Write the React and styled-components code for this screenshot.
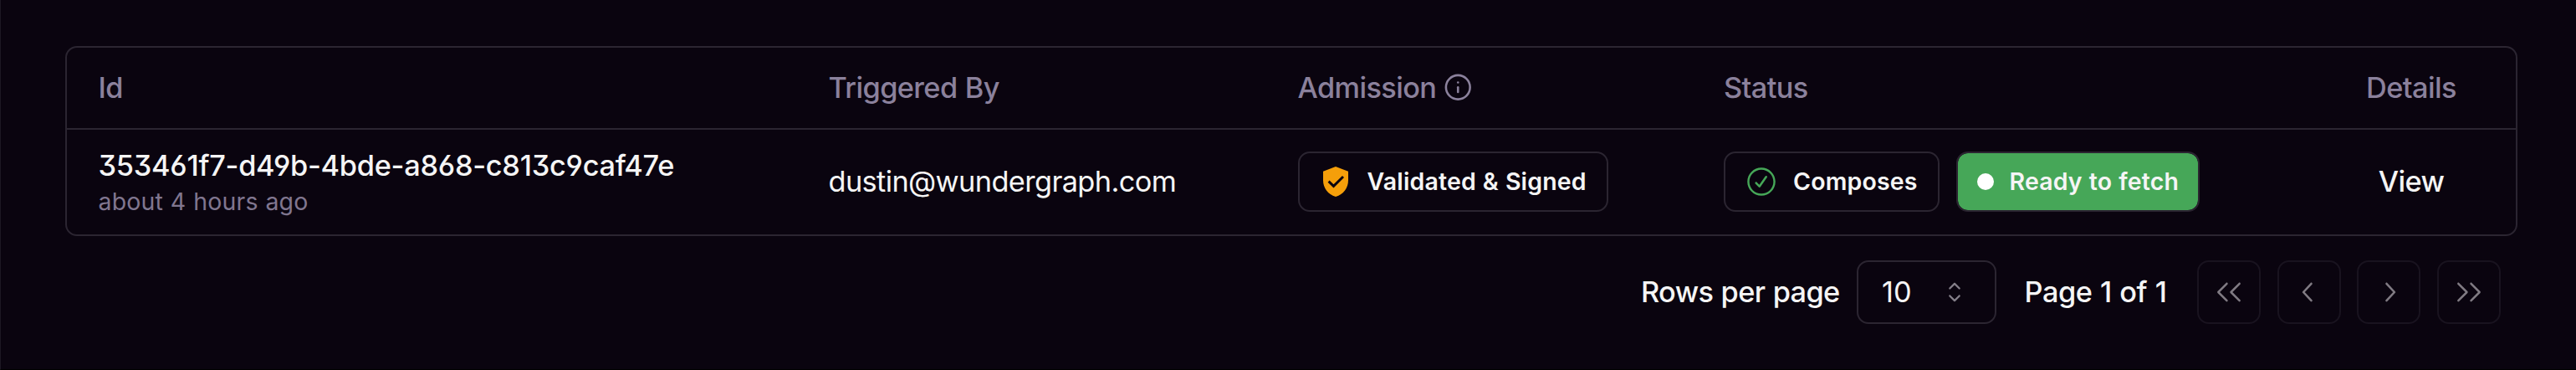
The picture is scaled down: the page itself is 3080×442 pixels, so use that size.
import React from "react";
import styled, { createGlobalStyle, css } from "styled-components";
import {
  RxCheckCircled,
  RxCaretSort,
  RxDoubleArrowLeft,
  RxDoubleArrowRight,
  RxChevronLeft,
  RxChevronRight,
} from "react-icons/rx";
import { Info } from "lucide-react";

const GlobalStyle = createGlobalStyle`
  *, *::before, *::after { box-sizing: border-box; }
  body {
    margin: 0;
    background: #0a040f;
    color: #f5f5f5;
    font-family: Inter, "Liberation Sans", sans-serif;
    font-size: 34.3px;
    letter-spacing: -0.6px;
    word-spacing: 0.7px;
    line-height: 47.5px;
    font-feature-settings: "cv03", "cv04", "cv09";
  }
  svg { display: block; flex: none; }
`;

const Page = styled.main`
  height: 442px;
  padding: 54.5px 70.5px 0 76.5px;
  border-left: 1px solid #1d1823;
  border-bottom: 1px solid #000;
  overflow: hidden;
`;

const Table = styled.section`
  border: 2px solid #2b2531;
  border-radius: 14px;
`;

const Row = styled.div`
  display: grid;
  grid-template-columns: 873px 561px 509.5px 735.5px 1fr;
  align-items: center;
  height: ${(p) => p.$height}px;
  color: ${(p) => (p.$header ? "#8b819c" : "inherit")};
  font-weight: ${(p) => (p.$header ? 500 : 400)};
  ${(p) =>
    p.$header &&
    css`
      border-bottom: 2px solid #2b2531;
    `}
`;

const Cell = styled.div`
  display: flex;
  align-items: center;
  gap: ${(p) => p.$gap || 0}px;
  padding-left: ${(p) => (p.$center ? 0 : 38)}px;
  justify-content: ${(p) => (p.$center ? "center" : "flex-start")};
  font-weight: ${(p) => (p.$strong ? 500 : "inherit")};
  white-space: nowrap;
`;

const Identity = styled.div`
  display: flex;
  flex-direction: column;
`;

const RunId = styled.span`
  font-weight: 500;
  letter-spacing: -0.25px;
  line-height: 47.4px;
`;

const Age = styled.span`
  color: #80768f;
  font-size: 28.5px;
  letter-spacing: 0.15px;
  line-height: 39.2px;
`;

const Badge = styled.span`
  display: flex;
  align-items: center;
  height: 72px;
  width: ${(p) => p.$width}px;
  padding-left: ${(p) => p.$pad}px;
  gap: ${(p) => p.$gap}px;
  border: 2px solid #2b2531;
  border-radius: 14px;
  background: ${(p) => (p.$filled ? "#46a758" : "transparent")};
  background-clip: padding-box;
  font-size: 28.5px;
  font-weight: 600;
  letter-spacing: 0.15px;
`;

const Dot = styled.i`
  width: 20px;
  height: 20px;
  border-radius: 50%;
  background: #fff;
`;

const Pagination = styled.footer`
  display: flex;
  align-items: center;
  justify-content: flex-end;
  margin-top: 29px;
  padding-right: 19.5px;
  font-weight: 500;
  white-space: nowrap;
`;

const PageSizeLabel = styled.span`
  width: 258px;
`;

const PageSize = styled.button`
  display: flex;
  align-items: center;
  justify-content: space-between;
  width: 167.5px;
  height: 76px;
  margin-right: 33px;
  padding: 0 29px 0 28px;
  border: 2px solid #2b2531;
  border-radius: 14px;
  background: transparent;
  color: inherit;
  font: inherit;
  font-weight: 400;
  letter-spacing: 0;

  svg { color: #847f89; }
`;

const PageCount = styled.span`
  width: 206.5px;
  letter-spacing: -0.4px;
`;

const Buttons = styled.div`
  display: flex;
  gap: 19.7px;
`;

const NavButton = styled.button`
  display: grid;
  place-items: center;
  width: 76px;
  height: 76px;
  padding: 0;
  border: 2px solid #19131f;
  border-radius: 14px;
  background: transparent;
  color: #807b83;
`;

function ShieldCheck() {
  return (
    <svg width="30" height="36" viewBox="0 0 30 36" fill="none">
      <path
        d="M15 0 30 5.7V16.5C30 25 24.5 33.5 15 36 5.5 33.5 0 25 0 16.5V5.7Z"
        fill="#f59f0a"
      />
      <path d="M6.6 17.6 12.5 23.4 24 12" stroke="#0a040f" strokeWidth="2.9" />
    </svg>
  );
}

export default function App() {
  return (
    <>
      <GlobalStyle />
      <Page>
        <Table>
          <Row $header $height={98}>
            <Cell>Id</Cell>
            <Cell>Triggered By</Cell>
            <Cell $gap={8.5}>
              Admission <Info size={34.5} strokeWidth={1.8} />
            </Cell>
            <Cell>Status</Cell>
            <Cell $center>Details</Cell>
          </Row>
          <Row $height={125}>
            <Cell>
              <Identity>
                <RunId>353461f7-d49b-4bde-a868-c813c9caf47e</RunId>
                <Age>about 4 hours ago</Age>
              </Identity>
            </Cell>
            <Cell>dustin@wundergraph.com</Cell>
            <Cell>
              <Badge $width={371} $pad={28} $gap={23}>
                <ShieldCheck />
                Validated &amp; Signed
              </Badge>
            </Cell>
            <Cell $gap={20}>
              <Badge $width={258} $pad={24} $gap={19}>
                <RxCheckCircled size={38} color="#46a758" />
                Composes
              </Badge>
              <Badge $filled $width={291} $pad={23} $gap={18.5}>
                <Dot />
                Ready to fetch
              </Badge>
            </Cell>
            <Cell $center $strong>View</Cell>
          </Row>
        </Table>
        <Pagination>
          <PageSizeLabel>Rows per page</PageSizeLabel>
          <PageSize>
            10
            <RxCaretSort size={38} />
          </PageSize>
          <PageCount>Page 1 of 1</PageCount>
          <Buttons>
            <NavButton><RxDoubleArrowLeft size={38} /></NavButton>
            <NavButton><RxChevronLeft size={38} /></NavButton>
            <NavButton><RxChevronRight size={38} /></NavButton>
            <NavButton><RxDoubleArrowRight size={38} /></NavButton>
          </Buttons>
        </Pagination>
      </Page>
    </>
  );
}
